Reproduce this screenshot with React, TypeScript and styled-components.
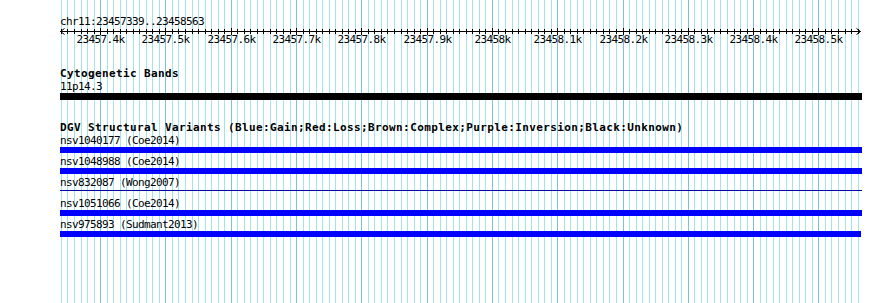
import { styled, createGlobalStyle } from 'styled-components'

// view: chr11:23457339..23458563 drawn into 802px
const BP_START = 23457339
const PX_PER_BP = 0.653
const VIEW_WIDTH = 802
const toX = (bp: number) => 0.3 + (bp - BP_START) * PX_PER_BP

const gridBps: number[] = []
for (let bp = 23457340; bp <= 23458560; bp += 10) gridBps.push(bp)

const GlobalStyle = createGlobalStyle`
  body {
    margin: 0;
    background: #fff;
  }
`

export default function App() {
  const texts = {
    location: 'chr11:23457339..23458563',
    cyto: 'Cytogenetic Bands',
    dgv: 'DGV Structural Variants (Blue:Gain;Red:Loss;Brown:Complex;Purple:Inversion;Black:Unknown)'
  }
  const variants = [
    { name: 'nsv1040177 (Coe2014)', width: 802, thin: false },
    { name: 'nsv1048988 (Coe2014)', width: 802, thin: false },
    { name: 'nsv832087 (Wong2007)', width: 802, thin: true },
    { name: 'nsv1051066 (Coe2014)', width: 802, thin: false },
    { name: 'nsv975893 (Sudmant2013)', width: 801, thin: false }
  ]
  return (
    <>
      <GlobalStyle />
      <Browser>
        <GridLayer width={VIEW_WIDTH} height={303}>
          {gridBps.map((bp) => {
            const x = Math.round(toX(bp)) + 0.5
            return (
              <line
                key={bp}
                x1={x}
                x2={x}
                y1={0}
                y2={303}
                stroke={bp % 100 === 0 ? '#7cc0e8' : '#a2e3ec'}
                strokeWidth={1}
              />
            )
          })}
        </GridLayer>
        <Content>
          <Location>{texts.location}</Location>
          <Ruler />
          <Track $gap={22}>
            <TrackTitle>{texts.cyto}</TrackTitle>
            <FeatureRow>
              <FeatureLabel>11p14.3</FeatureLabel>
              <BarSlot $h={7}>
                <Bar $w={802} $h={7} $top={0} $color="#000" />
              </BarSlot>
            </FeatureRow>
          </Track>
          <Track $gap={22}>
            <TrackTitle>{texts.dgv}</TrackTitle>
            {variants.map((v) => (
              <FeatureRow key={v.name}>
                <FeatureLabel>{v.name}</FeatureLabel>
                <BarSlot $h={6}>
                  {v.thin ? (
                    <Bar $w={v.width} $h={1} $top={1} $color="#0000a8" />
                  ) : (
                    <Bar $w={v.width} $h={6} $top={0} $color="#0000ff" />
                  )}
                </BarSlot>
              </FeatureRow>
            ))}
          </Track>
        </Content>
      </Browser>
    </>
  )
}

const Ruler = () => {
  const axisY = 3.5
  const right = 800.5
  return (
    <RulerSvg width={VIEW_WIDTH} height={18}>
      <line x1={0} x2={right} y1={axisY} y2={axisY} stroke="#000" />
      <polyline points={`4.5,0.5 0.5,${axisY} 4.5,6.5`} fill="none" stroke="#000" />
      <polyline points={`${right - 4},0.5 ${right},${axisY} ${right - 4},6.5`} fill="none" stroke="#000" />
      {gridBps.map((bp) => {
        const x = Math.round(toX(bp)) + 0.5
        const major = bp % 100 === 0
        return (
          <g key={bp}>
            <line x1={x} x2={x} y1={major ? 0 : 1} y2={major ? 7 : 6} stroke="#000" />
            {major && (
              <text x={x} y={15} textAnchor="middle">
                {`${bp / 1000}k`}
              </text>
            )}
          </g>
        )
      })}
    </RulerSvg>
  )
}

const Browser = styled.div`
  position: relative;
  width: 890px;
  height: 303px;
  overflow: hidden;
  box-sizing: border-box;
  padding-left: 60px;
  font-family: 'DejaVu Sans Mono', monospace;
  font-size: 11px;
  color: #000;
`

const GridLayer = styled.svg`
  position: absolute;
  left: 60px;
  top: 0;
  z-index: 0;
`

const Content = styled.div`
  position: relative;
  z-index: 1;
  width: ${VIEW_WIDTH}px;
`

const Location = styled.div`
  margin-top: 15px;
  line-height: 13px;
  letter-spacing: -0.62px;
  white-space: nowrap;
`

const RulerSvg = styled.svg`
  display: block;
  text {
    font-family: 'DejaVu Sans Mono', monospace;
    font-size: 11px;
    letter-spacing: -0.62px;
    fill: #000;
  }
`

const Track = styled.section<{ $gap: number }>`
  margin-top: ${(p) => p.$gap}px;
  display: flex;
  flex-direction: column;
`

const TrackTitle = styled.div`
  font-weight: bold;
  line-height: 12px;
  letter-spacing: 0.38px;
  white-space: nowrap;
`

const FeatureRow = styled.div`
  display: flex;
  flex-direction: column;
  & + & {
    margin-top: 2px;
  }
`

const FeatureLabel = styled.div`
  line-height: 13px;
  letter-spacing: -0.62px;
  white-space: nowrap;
`

const BarSlot = styled.div<{ $h: number }>`
  height: ${(p) => p.$h}px;
`

const Bar = styled.div<{ $w: number; $h: number; $top: number; $color: string }>`
  width: ${(p) => p.$w}px;
  height: ${(p) => p.$h}px;
  margin-top: ${(p) => p.$top}px;
  background: ${(p) => p.$color};
`
